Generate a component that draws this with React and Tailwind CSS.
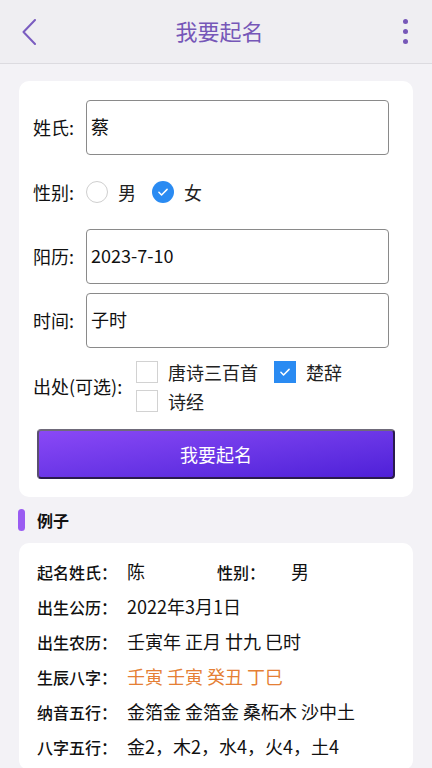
import React, { useState } from "react";

const FONT = { fontFamily: '"Noto Sans CJK SC", "Noto Sans", sans-serif' };

const examples = [
  { label: "出生公历：", value: "2022年3月1日" },
  { label: "出生农历：", value: "壬寅年 正月 廿九 巳时" },
  { label: "生辰八字：", value: "壬寅 壬寅 癸丑 丁巳", orange: true },
  { label: "纳音五行：", value: "金箔金 金箔金 桑柘木 沙中土" },
  { label: "八字五行：", value: "金2，木2，水4，火4，土4" },
];

const CheckMark = () => (
  <svg viewBox="0 0 24 24" className="w-[14px] h-[14px]" fill="none" stroke="white" strokeWidth="2.6" strokeLinecap="round" strokeLinejoin="round">
    <path d="M5 12.5l4.5 4.5L19 7.5" />
  </svg>
);

const Radio = ({ checked, label, onClick }) => (
  <button className="flex items-center gap-[10px]" onClick={onClick}>
    {checked ? (
      <span className="w-[22px] h-[22px] rounded-full bg-[#2a8bf2] flex items-center justify-center">
        <CheckMark />
      </span>
    ) : (
      <span className="w-[22px] h-[22px] rounded-full border border-[#cfcfcf] bg-white" />
    )}
    <span className="text-[18px] text-[#222]">{label}</span>
  </button>
);

const Check = ({ checked, label, onClick }) => (
  <button className="flex items-center gap-[10px] h-[22px]" onClick={onClick}>
    {checked ? (
      <span className="w-[22px] h-[22px] bg-[#2a8bf2] flex items-center justify-center">
        <CheckMark />
      </span>
    ) : (
      <span className="w-[22px] h-[22px] border border-[#d2d2d2] bg-white" />
    )}
    <span className="text-[18px] text-[#222]">{label}</span>
  </button>
);

const Field = ({ label, value, onChange }) => (
  <div className="flex items-center">
    <span className="w-[53px] shrink-0 text-[18px] text-[#111]">{label}</span>
    <input
      className="flex-1 h-[55px] border border-[#8a8a8a] rounded-[4px] px-[4px] pb-[3px] text-[18px] text-[#111] outline-none bg-white"
      value={value}
      onChange={(e) => onChange(e.target.value)}
    />
  </div>
);

export default function App() {
  const [surname, setSurname] = useState("蔡");
  const [gender, setGender] = useState("女");
  const [date, setDate] = useState("2023-7-10");
  const [time, setTime] = useState("子时");
  const [sources, setSources] = useState({ tang: false, chu: true, shi: false });

  const toggle = (key) => setSources({ ...sources, [key]: !sources[key] });

  return (
    <div className="min-h-screen bg-[#f3f2f6]" style={FONT}>
      {/* Header */}
      <div className="h-16 bg-[#efeef2] border-b border-[#dcdbe0] flex items-center justify-between pl-[22px] pr-[24px]">
        <svg viewBox="0 0 14 26" className="w-[14px] h-[26px]" fill="none" stroke="#7a5cc0" strokeWidth="2" strokeLinecap="round" strokeLinejoin="round">
          <path d="M13 1L1.5 13L13 25" />
        </svg>
        <h1 className="text-[22px] text-[#7657b8] pb-[2px]">我要起名</h1>
        <div className="flex flex-col gap-[5px] items-center">
          <span className="w-[5px] h-[5px] rounded-full bg-[#7657b8]" />
          <span className="w-[5px] h-[5px] rounded-full bg-[#7657b8]" />
          <span className="w-[5px] h-[5px] rounded-full bg-[#7657b8]" />
        </div>
      </div>

      <div className="px-[19px] pt-[17px]">
        {/* Form card */}
        <div className="bg-white rounded-[10px] pt-[19px] pb-[18px] pl-[14px] pr-[24px]">
          <Field label="姓氏:" value={surname} onChange={setSurname} />
          <div className="h-[74px] flex items-center">
            <span className="w-[53px] shrink-0 text-[18px] text-[#111]">性别:</span>
            <div className="flex items-center gap-[16px]">
              <Radio checked={gender === "男"} label="男" onClick={() => setGender("男")} />
              <Radio checked={gender === "女"} label="女" onClick={() => setGender("女")} />
            </div>
          </div>
          <Field label="阳历:" value={date} onChange={setDate} />
          <div className="mt-[9px]">
            <Field label="时间:" value={time} onChange={setTime} />
          </div>
          <div className="mt-[13px] flex items-center">
            <span className="w-[103px] shrink-0 text-[18px] text-[#111]">出处(可选):</span>
            <div className="flex flex-wrap gap-x-[16px] gap-y-[7px]">
              <Check checked={sources.tang} label="唐诗三百首" onClick={() => toggle("tang")} />
              <Check checked={sources.chu} label="楚辞" onClick={() => toggle("chu")} />
              <Check checked={sources.shi} label="诗经" onClick={() => toggle("shi")} />
            </div>
          </div>
          <button className="mt-[17px] ml-[4px] w-[358px] h-[50px] rounded-[4px] border-2 border-[#2a1b4d] border-t-[#6f6a7a] border-l-[#5a4f70] bg-gradient-to-br from-[#8a48f6] to-[#4f1fd8] text-white text-[18px]">
            我要起名
          </button>
        </div>

        {/* Example heading */}
        <div className="flex items-center h-[46px]">
          <span className="w-[7px] h-[22px] rounded-full bg-[#9a5cf2] -ml-[1px]" />
          <span className="ml-[12px] text-[16px] font-bold text-[#111] pb-[1px]">例子</span>
        </div>

        {/* Example card */}
        <div className="bg-white rounded-[10px] pl-[18px] pt-[11px] pb-[6px]">
          <div className="h-[35px] flex items-center">
            <span className="w-[90px] shrink-0 text-[16px] font-medium text-[#111]">起名姓氏：</span>
            <span className="w-[90px] shrink-0 text-[18px] text-[#111]">陈</span>
            <span className="w-[74px] shrink-0 text-[16px] font-medium text-[#111]">性别：</span>
            <span className="text-[18px] text-[#111]">男</span>
          </div>
          {examples.map((row) => (
            <div key={row.label} className="h-[35px] flex items-center">
              <span className="w-[90px] shrink-0 text-[16px] font-medium text-[#111]">{row.label}</span>
              <span className={`text-[18px] ${row.orange ? "text-[#e57f35]" : "text-[#111]"}`}>{row.value}</span>
            </div>
          ))}
        </div>
      </div>
    </div>
  );
}
